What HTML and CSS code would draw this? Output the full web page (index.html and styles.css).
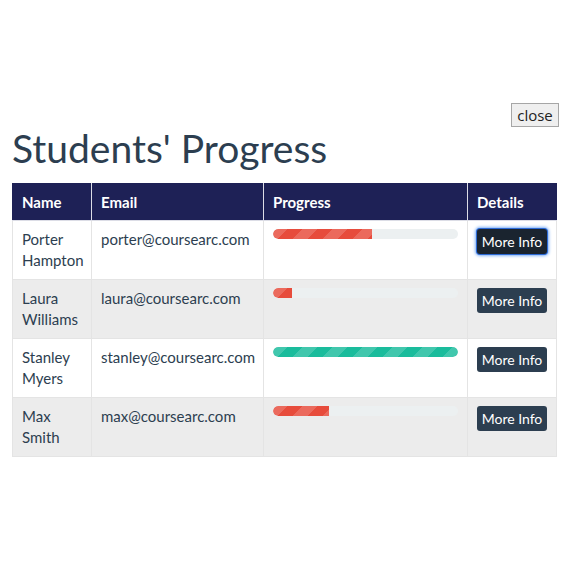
FILE: index.html
```html
<!DOCTYPE html>
<html>
<head>
<meta charset="utf-8">
<link rel="stylesheet" href="styles.css">
</head>
<body>
<div class="page">
  <div class="topbar"><button class="close">close</button></div>
  <h1 class="title">Students' Progress</h1>
  <table class="grid">
    <colgroup>
      <col class="c-name"><col class="c-email"><col class="c-prog"><col class="c-det">
    </colgroup>
    <thead>
      <tr><th>Name</th><th>Email</th><th>Progress</th><th>Details</th></tr>
    </thead>
    <tbody>
      <tr>
        <td>Porter Hampton</td><td>porter@coursearc.com</td>
        <td><div class="bar"><div class="fill red" style="width:53.5%"></div></div></td>
        <td><button class="info focus">More Info</button></td>
      </tr>
      <tr>
        <td>Laura Williams</td><td>laura@coursearc.com</td>
        <td><div class="bar"><div class="fill red" style="width:10%"></div></div></td>
        <td><button class="info">More Info</button></td>
      </tr>
      <tr>
        <td>Stanley Myers</td><td>stanley@coursearc.com</td>
        <td><div class="bar"><div class="fill green" style="width:100%"></div></div></td>
        <td><button class="info">More Info</button></td>
      </tr>
      <tr>
        <td>Max Smith</td><td>max@coursearc.com</td>
        <td><div class="bar"><div class="fill red" style="width:30.5%"></div></div></td>
        <td><button class="info">More Info</button></td>
      </tr>
    </tbody>
  </table>
</div>
</body>
</html>
```
FILE: styles.css
```css
html, body { margin: 0; padding: 0; background: #fff; }
body { font-family: Lato, "Open Sans", sans-serif; color: #2c3e50; }
.page { padding: 103px 10px 0 12px; }
.topbar { display: flex; justify-content: flex-end; margin-right: -3px; }
.close {
  font-family: "Open Sans", sans-serif; font-size: 15px; color: #222;
  background: #efefef; border: 1px solid #a6a6a6; border-radius: 0;
  height: 24px; width: 48px; padding: 0; line-height: 20px;
}
.title {
  font-family: Lato, sans-serif; font-weight: 400; font-size: 39px;
  line-height: 46px; margin: -2px 0 12px 0; color: #2c3e50;
}
.grid { border-collapse: collapse; width: 544px; table-layout: fixed; font-size: 15px; }
.c-name { width: 79px; } .c-email { width: 172px; } .c-prog { width: 204px; } .c-det { width: 89px; }
.grid th, .grid td {
  border: 1px solid #e4e4e4; padding: 8px 9px; line-height: 21px;
  text-align: left; vertical-align: top;
}
.grid th { background: #1e2156; color: #fff; font-weight: 700; padding-bottom: 7px; border-color: #dcdde6; border-top-color: #1e2156; }
.grid th:first-child { border-left-color: #1e2156; }
.grid th:last-child { border-right-color: #1e2156; }
.grid td { color: #2c3e50; }
.grid tbody tr:nth-child(even) td { background: #ececec; }
.bar { height: 10px; border-radius: 5px; background: #ecf0f1; overflow: hidden; }
.fill {
  height: 100%; border-radius: 5px 0 0 5px;
  background-image: linear-gradient(135deg, rgba(255,255,255,.17) 25%, transparent 25%, transparent 50%, rgba(255,255,255,.17) 50%, rgba(255,255,255,.17) 75%, transparent 75%, transparent);
  background-size: 30px 30px;
}
.fill.red { background-color: #e74c3c; }
.fill.green { background-color: #1abc9c; border-radius: 5px; }
.info {
  display: block;
  font-family: Lato, sans-serif; font-size: 14px; color: #fff; white-space: nowrap;
  background: #2c3e50; border: none; border-radius: 3px;
  height: 25px; width: 70px; padding: 0; margin: 0; line-height: 25px;
}
.info.focus { background: #1a242f; box-shadow: 0 0 0 1px #2c6ad6, 0 0 3px 2px #7fb0f5; }
```
